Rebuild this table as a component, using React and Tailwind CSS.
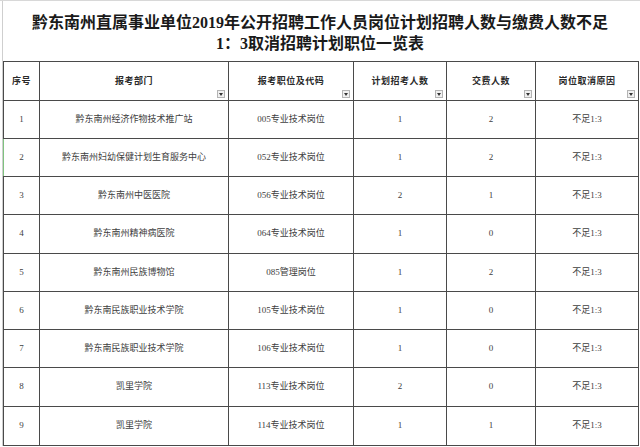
import React from 'react';

const rows = [
    ['1', '黔东南州经济作物技术推广站', '005专业技术岗位', '1', '2'],
    ['2', '黔东南州妇幼保健计划生育服务中心', '052专业技术岗位', '1', '2'],
    ['3', '黔东南州中医医院', '056专业技术岗位', '2', '1'],
    ['4', '黔东南州精神病医院', '064专业技术岗位', '1', '0'],
    ['5', '黔东南州民族博物馆', '085管理岗位', '1', '2'],
    ['6', '黔东南民族职业技术学院', '105专业技术岗位', '1', '0'],
    ['7', '黔东南民族职业技术学院', '106专业技术岗位', '1', '0'],
    ['8', '凯里学院', '113专业技术岗位', '2', '0'],
    ['9', '凯里学院', '114专业技术岗位', '1', '1'],
];

const heights = ['h-[38px]', 'h-[38px]', 'h-[38px]', 'h-[39px]', 'h-[38px]', 'h-[38px]', 'h-[38px]', 'h-[39px]', 'h-[39px]'];

const headers = ['序号', '报考部门', '报考职位及代码', '计划招考人数', '交费人数', '岗位取消原因'];

function FilterButton() {
    return (
        <span className="absolute right-[3px] bottom-[2px] w-[8px] h-[8px] bg-[#f0f0f0] border border-[#b4b4b4] flex items-center justify-center">
            <svg width="4" height="3" viewBox="0 0 4 3">
                <path d="M0 0 L4 0 L2 3 Z" fill="#333" />
            </svg>
        </span>
    );
}

export default function App() {
    return (
        <div className="w-[640px] h-[447px] bg-white overflow-hidden border-t border-[#d8d8d8]" style={{ fontFamily: '"Liberation Serif", "Noto Sans CJK SC", serif' }}>
            <div className="ml-[2px] mr-[3px] border-l border-[#cfcfcf]">
                <div className="h-[60px] pt-[11px] text-center text-[16px] leading-[21px] font-bold text-[#1a1a1a]">
                    黔东南州直属事业单位2019年公开招聘工作人员岗位计划招聘人数与缴费人数不足<br />
                    1：3取消招聘计划职位一览表
                </div>
                <table className="table-fixed border-collapse w-[635px] text-center">
                    <colgroup>
                        <col className="w-[36px]" />
                        <col className="w-[189px]" />
                        <col className="w-[125px]" />
                        <col className="w-[93px]" />
                        <col className="w-[89px]" />
                        <col className="w-[103px]" />
                    </colgroup>
                    <thead>
                        <tr className="h-[39px]">
                            {headers.map((h, i) => (
                                <th key={h} className="relative border border-[#4a4a4a] text-[9px] font-bold tracking-[0.5px] text-[#2a2a2a] p-0" style={{ fontFamily: '"Noto Sans CJK SC", sans-serif' }}>
                                    {h}
                                    {i > 0 && <FilterButton />}
                                </th>
                            ))}
                        </tr>
                    </thead>
                    <tbody className="text-[9px] text-[#404040]">
                        {rows.map((r, idx) => (
                            <tr key={r[0]} className={heights[idx]}>
                                <td className={`border border-[#4a4a4a] p-0 ${idx === 1 ? 'border-l-[#7fc27f]' : ''}`}>{r[0]}</td>
                                <td className="border border-[#4a4a4a] p-0">{r[1]}</td>
                                <td className="border border-[#4a4a4a] p-0">{r[2]}</td>
                                <td className="border border-[#4a4a4a] p-0">{r[3]}</td>
                                <td className="border border-[#4a4a4a] p-0">{r[4]}</td>
                                <td className="border border-[#4a4a4a] p-0">不足1:3</td>
                            </tr>
                        ))}
                    </tbody>
                </table>
            </div>
        </div>
    );
}
